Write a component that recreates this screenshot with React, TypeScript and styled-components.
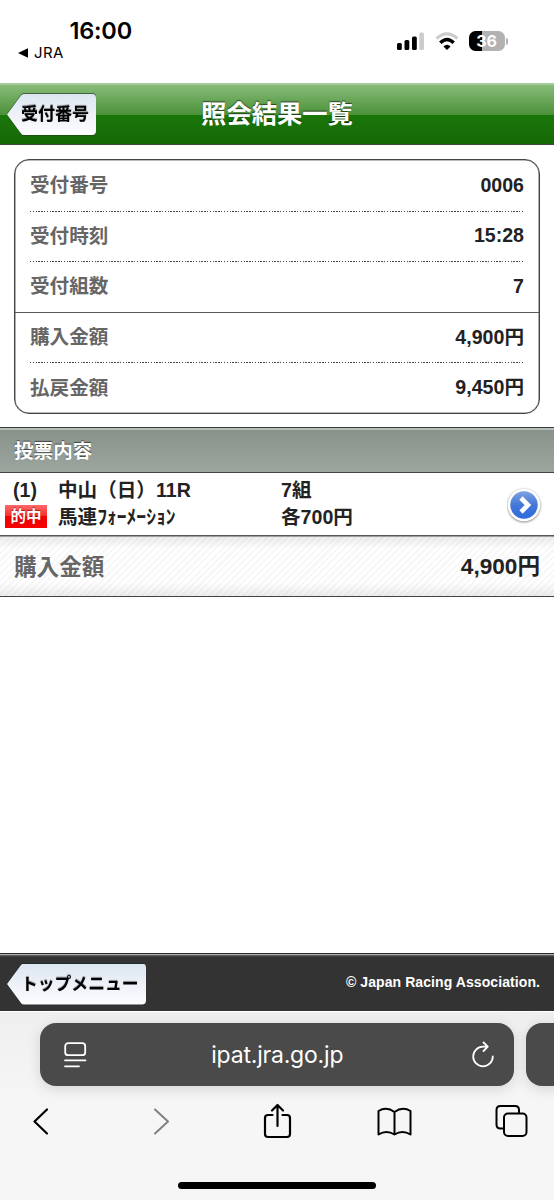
import React from "react";
import styled, { createGlobalStyle } from "styled-components";

const GlobalStyle = createGlobalStyle`
  *, *::before, *::after { box-sizing: border-box; }
  html, body { margin: 0; padding: 0; background: #fff; }
  body { font-family: "Liberation Sans", "Noto Sans CJK JP", sans-serif; color: #222; }
`;

const Screen = styled.div`
  width: 554px;
  height: 1200px;
  display: flex;
  flex-direction: column;
  overflow: hidden;
  background: #fff;
`;

const StatusBar = styled.header`
  height: 83px;
  flex: none;
  display: flex;
  justify-content: space-between;
  padding: 17px 46px 0 18px;
  font-family: Inter, sans-serif;
  color: #000;
`;

const StatusLeft = styled.div`
  display: flex;
  flex-direction: column;
`;

const Clock = styled.div`
  padding-left: 51.5px;
  font-size: 23.5px;
  line-height: 28px;
  font-weight: 600;
  letter-spacing: -0.2px;
`;

const BackToApp = styled.div`
  display: flex;
  align-items: center;
  gap: 6px;
  padding-top: 1px;
  font-size: 15px;
  line-height: 14px;
  letter-spacing: 0.4px;
`;

const StatusRight = styled.div`
  display: flex;
  align-items: flex-start;
  padding-top: 14px;
`;

const SignalIcon = styled.svg`
  margin-right: 11px;
`;

const WifiIcon = styled.svg`
  margin-right: 10px;
`;

const Battery = styled.div`
  width: 36px;
  height: 20px;
  border-radius: 6.5px;
  display: flex;
  align-items: center;
  justify-content: center;
  padding-right: 1px;
  background: linear-gradient(90deg, #000 36%, #b2b2b2 36%);
  color: #fff;
  font-size: 16px;
  line-height: 20px;
  font-weight: 700;
  letter-spacing: -0.1px;
`;

const BatteryTip = styled.div`
  width: 2px;
  height: 7px;
  margin: 6.5px 0 0 1px;
  border-radius: 0 2px 2px 0;
  background: #b2b2b2;
`;

const TitleBar = styled.div`
  height: 62px;
  flex: none;
  display: grid;
  grid-template-columns: 100px 1fr 100px;
  align-items: center;
  padding-left: 7px;
  padding-right: 7px;
  border-top: 2px solid #a4cb99;
  border-bottom: 1px solid #3f4a3c;
  background: linear-gradient(#87bb79 0, #4c923a 50%, #1a760a 50%, #176806 100%);
`;

const Title = styled.h1`
  margin: 0;
  padding-bottom: 2px;
  text-align: center;
  color: #fff;
  font-size: 25.3px;
  line-height: 36px;
  font-weight: 700;
  white-space: nowrap;
  text-shadow: 0 -1px 1px rgba(0, 0, 0, 0.6);
`;

const ArrowShadow = styled.div`
  justify-self: start;
  filter: drop-shadow(0 -1px 0.5px rgba(20, 40, 30, 0.55)) drop-shadow(0 1px 0.5px rgba(20, 40, 30, 0.3));
`;

const ArrowButton = styled.button<{ $wide?: boolean }>`
  display: block;
  width: ${(p) => (p.$wide ? 139 : 89)}px;
  height: 41px;
  border: 0;
  padding: 0 0 0 14px;
  text-align: left;
  background: linear-gradient(#dce6f2, #eef1f8 50%, #fdfdff);
  clip-path: ${(p) =>
    p.$wide
      ? 'path("M0 20.5 L14 1.5 Q15 0 17 0 H135 Q139 0 139 4 V37 Q139 41 135 41 H17 Q15 41 14 39.500 Z")'
      : 'path("M0 20.5 L14 1.500 Q15 0 17 0 H85 Q89 0 89 4 V37 Q89 41 85 41 H17 Q15 41 14 39.500 Z")'};
  color: #000;
  font-family: inherit;
  font-size: ${(p) => (p.$wide ? 16.8 : 17)}px;
  line-height: 41px;
  font-weight: 700;
  white-space: nowrap;
  text-shadow: 0 -1px 1px rgba(0, 0, 0, 0.45);
`;

const Summary = styled.dl`
  flex: none;
  margin: 14px 14px 0;
  height: 255px;
  border: 1px solid #444;
  border-radius: 15px;
  box-shadow: inset 0 0 0 0.6px #777;
  display: flex;
  flex-direction: column;
`;

const Group = styled.div<{ $rows: number }>`
  flex: ${(p) => p.$rows} 1 0;
  display: flex;
  flex-direction: column;
  padding: 0 15px;
  & + & {
    background: linear-gradient(#5a5a5a, #5a5a5a) 0 -0.5px / 100% 1.5px no-repeat;
  }
`;

const dots = `repeating-linear-gradient(90deg, #444 0 1.4px, transparent 1.4px 2.81px)`;

const SummaryRow = styled.div`
  flex: 1;
  display: flex;
  align-items: center;
  justify-content: space-between;
  font-size: 19.6px;
  font-weight: 700;
  line-height: 28px;
  & + & { background: ${dots} 0 0 / 100% 1.4px no-repeat; }
`;

const Label = styled.dt`
  color: #666;
`;

const Value = styled.dd`
  margin: 0;
  padding-bottom: 1px;
  color: #222;
`;

const SectionHead = styled.h2`
  flex: none;
  height: 46px;
  margin: 13px 0 0;
  padding: 0 14px;
  border-top: 1px solid #3c3c3c;
  border-bottom: 1px solid #444;
  box-shadow: inset 0 2px 0 #b4beb8;
  background: linear-gradient(#88928b, #9ca69f);
  color: #fff;
  font-size: 19.6px;
  line-height: 46px;
  font-weight: 700;
  text-shadow: 0 -1px 1px rgba(0, 0, 0, 0.55);
`;

const BetRow = styled.div`
  flex: none;
  height: 62px;
  display: grid;
  grid-template-columns: 53px 223px 1fr 34px;
  align-items: center;
  padding: 1px 13px 0 5px;
  font-size: 19.6px;
  line-height: 26.5px;
  font-weight: 700;
`;

const BetColumn = styled.div`
  display: flex;
  flex-direction: column;
  padding-bottom: 2px;
  white-space: nowrap;
`;

const BetNumber = styled.span`
  padding-left: 8px;
`;

const HitBadge = styled.span`
  width: 42px;
  height: 23px;
  margin: 1px 0 2.5px;
  text-align: center;
  background: linear-gradient(#ff6a6a, #fa2d2d 48%, #ee0000 50%, #fa0000);
  color: #fff;
  font-size: 15.5px;
  line-height: 24px;
  text-shadow: 0 -1px 1px rgba(120, 0, 0, 0.6);
`;

const Total = styled.div`
  flex: none;
  height: 62px;
  display: flex;
  align-items: center;
  justify-content: space-between;
  padding: 2px 14px 0;
  border-bottom: 1px solid #444;
  box-shadow: inset 0 1.6px 0 #5a5555;
  font-size: 22.6px;
  line-height: 32px;
  font-weight: 700;
  background:
    linear-gradient(rgba(0, 0, 0, 0.09), transparent 22%, transparent 78%, rgba(0, 0, 0, 0.07)),
    repeating-linear-gradient(135deg, #fff 0 2.4px, #f8f8f8 2.4px 4.8px);
`;

const TotalLabel = styled.span`
  padding-top: 2px;
  color: #666;
`;

const Spacer = styled.div`
  flex: 1;
`;

const Footer = styled.footer`
  flex: none;
  height: 58px;
  display: flex;
  align-items: center;
  justify-content: space-between;
  padding: 3px 14px 0 7px;
  border-top: 1.5px solid #2c2c2c;
  box-shadow: inset 0 1.3px 0 #aaa, inset 0 2.4px 0 #444;
  background: #333;
  color: #fff;
`;

const Copyright = styled.small`
  padding-bottom: 4px;
  font-size: 14px;
  font-weight: 700;
  letter-spacing: 0.08px;
`;

const BrowserChrome = styled.nav`
  flex: none;
  height: 189px;
  display: flex;
  flex-direction: column;
  align-items: center;
  border-top: 1.5px solid #fff;
  background: linear-gradient(#efefef, #f6f6f6 50%);
  overflow: hidden;
`;

const Tabs = styled.div`
  align-self: stretch;
  display: flex;
  gap: 12px;
  padding: 10.5px 0 0 39.5px;
`;

const UrlBar = styled.div`
  flex: none;
  width: 474.5px;
  height: 63px;
  display: flex;
  align-items: center;
  justify-content: space-between;
  padding: 1px 20px 0 24px;
  border-radius: 16px;
  background: #4a4a4a;
  box-shadow: 0 3px 14px rgba(0, 0, 0, 0.13);
  color: #fff;
  font-family: Inter, sans-serif;
  font-size: 23px;
  letter-spacing: -0.2px;
`;

const UrlText = styled.span`
  padding-right: 4px;
`;

const NextTab = styled(UrlBar)`
  width: 60px;
`;

const Tools = styled.div`
  align-self: stretch;
  flex: none;
  display: flex;
  align-items: center;
  justify-content: space-between;
  height: 44px;
  margin-top: 13.5px;
  padding: 0 24px 0 23px;
`;

const HomeIndicator = styled.div`
  width: 198px;
  height: 7px;
  margin-top: 38.5px;
  border-radius: 4px;
  background: #000;
`;

const stroke = {
  fill: "none",
  strokeLinecap: "round" as const,
  strokeLinejoin: "round" as const,
};

const groups = [
  [
    ["受付番号", "0006"],
    ["受付時刻", "15:28"],
    ["受付組数", "7"],
  ],
  [
    ["購入金額", "4,900円"],
    ["払戻金額", "9,450円"],
  ],
];

export default function App() {
  return (
    <Screen>
      <GlobalStyle />
      <StatusBar>
        <StatusLeft>
          <Clock>16:00</Clock>
          <BackToApp>
            <svg width="10" height="10" viewBox="0 0 10 10">
              <path d="M0 5 L10 0.300 V9.700 Z" fill="#000" />
            </svg>
            JRA
          </BackToApp>
        </StatusLeft>
        <StatusRight>
          <SignalIcon width="28" height="20" viewBox="0 0 28 20">
            <rect x="1" y="12" width="4.800" height="7" rx="1.500" />
            <rect x="8.500" y="9" width="4.800" height="10" rx="1.500" />
            <rect x="16" y="5.500" width="4.800" height="13.500" rx="1.500" />
            <rect x="23.300" y="1.500" width="4.700" height="17.500" rx="1.500" fill="#ccc" />
          </SignalIcon>
          <WifiIcon width="24" height="20" viewBox="0 0 24 20">
            <path d="M1.600 7.500 Q12 -1.900 22.400 7.500" fill="none" stroke="#ccc" strokeWidth="3.200" />
            <path d="M5.300 11.800 Q12 5.200 18.700 11.800" fill="none" stroke="#000" strokeWidth="3.400" />
            <path d="M12 19 L8.400 15.400 Q12 12 15.600 15.400 Z" fill="#000" />
          </WifiIcon>
          <Battery>36</Battery>
          <BatteryTip />
        </StatusRight>
      </StatusBar>

      <TitleBar>
        <ArrowShadow>
          <ArrowButton>受付番号</ArrowButton>
        </ArrowShadow>
        <Title>照会結果一覧</Title>
      </TitleBar>

      <Summary>
        {groups.map((rows, i) => (
          <Group key={i} $rows={rows.length}>
            {rows.map(([label, value]) => (
              <SummaryRow key={label}>
                <Label>{label}</Label>
                <Value>{value}</Value>
              </SummaryRow>
            ))}
          </Group>
        ))}
      </Summary>

      <SectionHead>投票内容</SectionHead>
      <BetRow>
        <BetColumn>
          <BetNumber>(1)</BetNumber>
          <HitBadge>的中</HitBadge>
        </BetColumn>
        <BetColumn>
          <span>中山（日）11R</span>
          <span>馬連ﾌｫｰﾒｰｼｮﾝ</span>
        </BetColumn>
        <BetColumn>
          <span>7組</span>
          <span>各700円</span>
        </BetColumn>
        <svg width="36" height="38" viewBox="0 0 36 38">
          <defs>
            <linearGradient id="disc" x1="0" y1="0" x2="0" y2="1">
              <stop offset="0" stopColor="#7fa3e2" />
              <stop offset="0.5" stopColor="#4377d8" />
              <stop offset="1" stopColor="#2e6be0" />
            </linearGradient>
            <filter id="soft" x="-20%" y="-20%" width="140%" height="140%">
              <feGaussianBlur stdDeviation="1" />
            </filter>
          </defs>
          <circle cx="17" cy="19.800" r="16.500" fill="#000" opacity="0.45" filter="url(#soft)" />
          <circle cx="17" cy="19" r="16.300" fill="#fff" />
          <circle cx="17" cy="19" r="13.700" fill="url(#disc)" />
          <path d="M14 12 L21 19 L14 26" fill="none" stroke="#fff" strokeWidth="4.600" />
        </svg>
      </BetRow>
      <Total>
        <TotalLabel>購入金額</TotalLabel>
        <span>4,900円</span>
      </Total>

      <Spacer />

      <Footer>
        <ArrowShadow>
          <ArrowButton $wide>トップメニュー</ArrowButton>
        </ArrowShadow>
        <Copyright>© Japan Racing Association.</Copyright>
      </Footer>

      <BrowserChrome>
        <Tabs>
          <UrlBar>
            <svg width="23" height="28" viewBox="0 0 23 28" {...stroke} stroke="#fff" strokeWidth="1.800">
              <rect x="1.200" y="2.200" width="20" height="12" rx="3" />
              <path d="M1 19.300 H21.500 M1 25.300 H15" />
            </svg>
            <UrlText>ipat.jra.go.jp</UrlText>
            <svg width="22" height="28" viewBox="0 0 22 28" {...stroke} stroke="#fff" strokeWidth="1.800">
              <path d="M20.800 15.500 A9.800 9.800 0 1 1 11 5.700 H15.500 M11.500 1.500 L15.800 5.700 L11.500 10" />
            </svg>
          </UrlBar>
          <NextTab />
        </Tabs>
        <Tools>
          <svg width="36" height="36" viewBox="0 -0.500 36 36" {...stroke} stroke="#000" strokeWidth="2.200">
            <path d="M24 6 L11.500 18 L24 30" />
          </svg>
          <svg width="36" height="36" viewBox="0 -0.500 36 36" {...stroke} stroke="#808080" strokeWidth="2">
            <path d="M14 6 L27 18 L14 30" />
          </svg>
          <svg width="36" height="36" viewBox="-3.500 0 36 36" {...stroke} stroke="#000" strokeWidth="2.200">
            <path d="M10 12 H5.500 Q2.500 12 2.500 15 V31 Q2.500 34 5.500 34 H24.500 Q27.500 34 27.500 31 V15 Q27.500 12 24.500 12 H20 M15 23 V2.500 M9.500 7.500 L15 2 L20.500 7.500" />
          </svg>
          <svg width="36" height="36" viewBox="-0.500 -4 36 36" {...stroke} stroke="#000" strokeWidth="2">
            <path d="M18 5 Q10 -1 2 4 V27.500 Q10 22.500 18 27.500 Q26 22.500 34 27.500 V4 Q26 -1 18 5 V27.500" />
          </svg>
          <svg width="36" height="36" viewBox="-0.500 -1 36 36" {...stroke} stroke="#000" strokeWidth="2">
            <path d="M9 24.500 H6 Q2 24.500 2 20.500 V6 Q2 2 6 2 H20.500 Q24.500 2 24.500 6 V9" />
            <rect x="9.500" y="9.500" width="22.500" height="22.500" rx="4" />
          </svg>
        </Tools>
        <HomeIndicator />
      </BrowserChrome>
    </Screen>
  );
}
